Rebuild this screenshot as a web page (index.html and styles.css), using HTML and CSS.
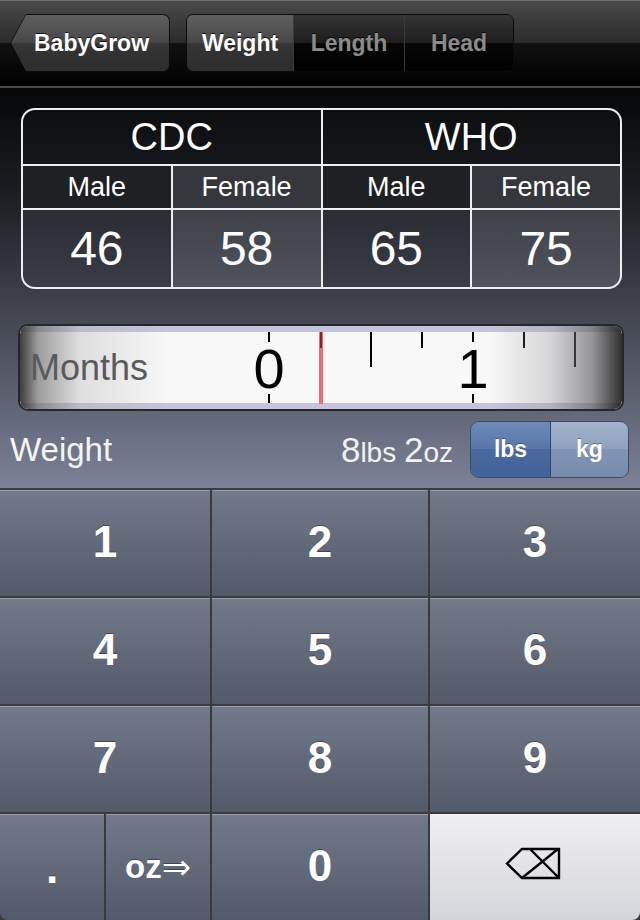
FILE: index.html
```html
<!DOCTYPE html>
<html>
<head>
<meta charset="utf-8">
<title>BabyGrow</title>
<link rel="stylesheet" href="styles.css">
</head>
<body>
<div class="screen">
  <header class="navbar">
    <div class="back"><div class="back-inner">BabyGrow</div></div>
    <div class="tabs">
      <div class="tab tab-on">Weight</div>
      <div class="tab">Length</div>
      <div class="tab">Head</div>
    </div>
  </header>

  <main class="content">
    <div class="chart">
      <div class="cell head">CDC</div>
      <div class="cell head">WHO</div>
      <div class="cell sub male">Male</div>
      <div class="cell sub female">Female</div>
      <div class="cell sub male">Male</div>
      <div class="cell sub female">Female</div>
      <div class="cell val male">46</div>
      <div class="cell val female">58</div>
      <div class="cell val male">65</div>
      <div class="cell val female">75</div>
    </div>

    <div class="ruler">
      <div class="strip">
        <span class="tick tick-major" style="left:248px"></span>
        <span class="tick tick-foot" style="left:248px"></span>
        <span class="tick tick-mid" style="left:350px"></span>
        <span class="tick tick-short" style="left:401px"></span>
        <span class="tick tick-major" style="left:452px"></span>
        <span class="tick tick-foot" style="left:452px"></span>
        <span class="tick tick-short" style="left:503px"></span>
        <span class="tick tick-mid" style="left:554px"></span>
        <span class="num" style="left:249px">0</span>
        <span class="num" style="left:453px">1</span>
        <span class="marker"></span>
        <span class="tick tick-short tick-under" style="left:300px"></span>
      </div>
      <div class="shade"></div>
      <span class="months">Months</span>
    </div>

    <div class="weight-row">
      <div class="wlabel">Weight</div>
      <div class="wvalue"><span class="big">8</span>lbs <span class="big">2</span>oz</div>
      <div class="units">
        <div class="unit unit-on">lbs</div>
        <div class="unit unit-off">kg</div>
      </div>
    </div>
  </main>

  <div class="keypad">
    <div class="key wide">1</div>
    <div class="key">2</div>
    <div class="key">3</div>
    <div class="key wide">4</div>
    <div class="key">5</div>
    <div class="key">6</div>
    <div class="key wide">7</div>
    <div class="key">8</div>
    <div class="key">9</div>
    <div class="key key-dot">.</div>
    <div class="key key-oz">oz<span class="arrow">⇒</span></div>
    <div class="key">0</div>
    <div class="key key-del">
      <svg class="del-icon" width="56" height="34" viewBox="0 0 56 34">
        <path d="M2 16.5 L17 2 L54 2 L54 31 L17 31 Z M25 2 L54 31 M17 31 L53 2" fill="none" stroke="#000" stroke-width="2.4" stroke-linejoin="miter"/>
      </svg>
    </div>
  </div>
</div>
</body>
</html>
```

FILE: styles.css
```css
* { box-sizing: border-box; }

html, body {
  margin: 0;
  padding: 0;
}

body {
  width: 640px;
  height: 920px;
  overflow: hidden;
  background: #000;
  font-family: "Liberation Sans", Arial, sans-serif;
}

.screen {
  width: 640px;
  height: 920px;
  display: flex;
  flex-direction: column;
}

/* ---------- navigation bar ---------- */
.navbar {
  flex: none;
  height: 88px;
  display: flex;
  align-items: flex-start;
  gap: 16px;
  padding: 13px 0 0 10px;
  border-top: 1px solid #707070;
  border-bottom: 2px solid #4c4c4c;
  background: linear-gradient(#4a4a4a 0%, #2b2b2b 49%, #111 50%, #000 100%);
}

.back {
  width: 160px;
  height: 58px;
  padding: 1px;
  background: #0b0b0b;
  border-radius: 0 7px 7px 0;
  clip-path: polygon(16px 0, 100% 0, 100% 100%, 16px 100%, 0 50%);
}

.back-inner {
  height: 100%;
  display: flex;
  align-items: center;
  padding-left: 23px;
  border-radius: 0 6px 6px 0;
  clip-path: polygon(15px 0, 100% 0, 100% 100%, 15px 100%, 0 50%);
  background: linear-gradient(#5f5f5f, #474747 49%, #363636 50%, #2c2c2c);
  color: #fff;
  font-weight: bold;
  font-size: 23px;
  text-shadow: 0 -1px 0 rgba(0, 0, 0, 0.7);
}

.tabs {
  display: flex;
  height: 58px;
  border: 1px solid #0b0b0b;
  border-radius: 7px;
  overflow: hidden;
}

.tab {
  width: 111px;
  display: flex;
  align-items: center;
  justify-content: center;
  border-left: 1px solid #3a3a3a;
  background: linear-gradient(#343434, #1e1e1e 49%, #060606 50%, #000);
  color: #8b8b8b;
  font-weight: bold;
  font-size: 23px;
  text-shadow: 0 -1px 0 rgba(0, 0, 0, 0.8);
}

.tab:first-child {
  width: 106px;
  border-left: 0;
}

.tab:last-child { width: 109px; }

.tab-on {
  color: #fff;
  background: linear-gradient(#5f5f5f, #474747 49%, #363636 50%, #2c2c2c);
}

/* ---------- content ---------- */
.content {
  flex: none;
  height: 400px;
  padding-top: 20px;
  display: flex;
  flex-direction: column;
  background: linear-gradient(#060708 0%, #1b1c21 25%, #3c3f48 52%, #7c8297 100%);
}

.chart {
  margin: 0 18px 0 21px;
  display: grid;
  grid-template-columns: repeat(4, 1fr);
  grid-template-rows: 54px 42px 77px;
  gap: 2px;
  border: 2px solid #eeeeee;
  border-radius: 14px;
  overflow: hidden;
  background: #eeeeee;
}

.cell {
  display: flex;
  align-items: center;
  justify-content: center;
  color: #fff;
}

.head {
  grid-column: span 2;
  font-size: 38px;
  background: linear-gradient(#0d0e10, #16171a);
}

.sub { font-size: 27px; }
.sub.male { background: #1f2024; }
.sub.female { background: #36373c; }

.val { font-size: 48px; }
.val.male { background: linear-gradient(#2a2c33, #3a3d46); }
.val.female { background: linear-gradient(#3f4148, #50535c); }

/* ---------- ruler ---------- */
.ruler {
  position: relative;
  margin: 35px 16px 0 18px;
  height: 87px;
  padding: 6px 0;
  border: 2px solid #26272b;
  border-radius: 10px;
  background: #c4c4da;
  overflow: hidden;
}

.strip {
  position: relative;
  height: 71px;
  background: #f8f8f8;
}

.tick {
  position: absolute;
  top: 0;
  width: 2px;
  background: #000;
}

.tick-major { height: 10px; }
.tick-foot { top: auto; bottom: 0; height: 9px; }
.tick-mid { height: 35px; }
.tick-short { height: 16px; }

.tick-under {
  width: 2px;
  background: #9a1c1c;
}

.num {
  position: absolute;
  top: 9px;
  transform: translateX(-50%);
  font-size: 56px;
  line-height: 56px;
  color: #000;
}

.marker {
  position: absolute;
  top: 0;
  bottom: -1px;
  left: 299px;
  width: 4px;
  background: #f56b6b;
}

.shade {
  position: absolute;
  inset: 0;
  border-radius: 8px;
  background: linear-gradient(90deg,
    rgba(45, 45, 45, 0.92) 0%,
    rgba(100, 100, 100, 0.62) 3%,
    rgba(170, 170, 170, 0.32) 10%,
    rgba(255, 255, 255, 0) 25%,
    rgba(255, 255, 255, 0) 78%,
    rgba(150, 150, 155, 0.35) 88%,
    rgba(90, 90, 95, 0.62) 95%,
    rgba(30, 30, 30, 0.92) 100%);
}

.months {
  position: absolute;
  left: 10px;
  top: 24px;
  font-size: 36px;
  line-height: 36px;
  color: #5a5a5a;
}

/* ---------- weight row ---------- */
.weight-row {
  margin-top: 10px;
  height: 57px;
  padding: 0 11px 0 10px;
  display: flex;
  align-items: center;
}

.wlabel {
  flex: 1;
  font-size: 33px;
  color: #f4f4f4;
}

.wvalue {
  margin-right: 17px;
  font-size: 28px;
  color: #f2f2f2;
}

.wvalue .big { font-size: 35px; }

.units {
  display: flex;
  width: 159px;
  height: 57px;
  border: 1px solid #3d4a63;
  border-radius: 9px;
  overflow: hidden;
}

.unit {
  display: flex;
  align-items: center;
  justify-content: center;
  color: #fff;
  font-weight: bold;
  font-size: 23px;
  text-shadow: 0 -1px 0 rgba(0, 0, 0, 0.35);
}

.unit-on {
  width: 80px;
  border-right: 1px solid #2b4272;
  background: linear-gradient(#6d8ab8, #5877a8 49%, #4a6a9f 50%, #41619a);
}

.unit-off {
  flex: 1;
  background: linear-gradient(#a3b3cb, #8ea1bd 49%, #8196b5 50%, #778cad);
}

/* ---------- keypad ---------- */
.keypad {
  flex: none;
  height: 432px;
  padding-top: 2px;
  display: grid;
  grid-template-columns: 104px 104px 216px 210px;
  grid-template-rows: repeat(4, 106px);
  gap: 2px;
  background: #3a3a3c;
}

.key {
  display: flex;
  align-items: center;
  justify-content: center;
  padding-bottom: 4px;
  border-top: 1px solid #9aa0ab;
  background: linear-gradient(#727988, #525a69);
  color: #fff;
  font-weight: bold;
  font-size: 44px;
  text-shadow: 0 -1px 0 rgba(0, 0, 0, 0.35);
}

.wide { grid-column: span 2; }

.key-dot {
  padding-bottom: 0;
  border-bottom-left-radius: 8px;
}

.key-oz { font-size: 33px; padding-bottom: 2px; }

.key-oz .arrow {
  font-family: "DejaVu Sans", sans-serif;
  font-weight: normal;
  font-size: 35px;
}

.key-del {
  padding-bottom: 0;
  border-top-color: #f4f4f6;
  border-bottom-right-radius: 8px;
  background: linear-gradient(#f0f0f2, #d4d5da);
}

.del-icon {
  margin: 0 4px 7px 0;
}
```
